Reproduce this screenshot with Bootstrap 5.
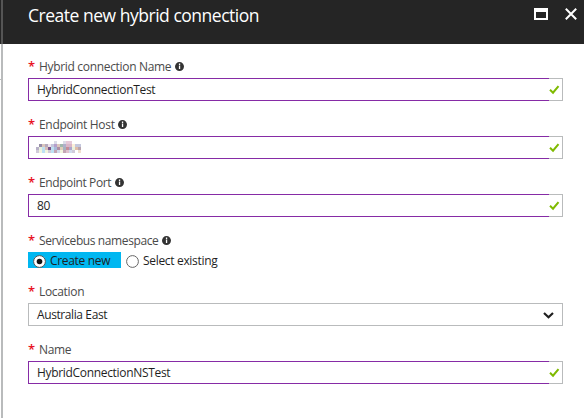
<!DOCTYPE html>
<html lang="en">
<head>
<meta charset="utf-8">
<title>Create new hybrid connection</title>
<link href="https://cdn.jsdelivr.net/npm/bootstrap@5.3.0/dist/css/bootstrap.min.css" rel="stylesheet">
<style>
body{font-family:"Open Sans","Noto Sans",sans-serif;font-size:12px;color:#1f1f1f;background:#fff;height:418px;overflow:hidden}
.blade-edge{width:3px;border-right:2px solid #b9bbbc;background:#fff;padding-top:35px}
.edge-top{width:3px;height:44px;background:#252525;border-right:2px solid #555}
.edge-tick{width:1px;height:1px;background:#bbb}
.blade-head{height:44px;background:#252525;color:#fff;padding:0 7px 0 25px}
.blade-title{font-size:17.5px;line-height:30px;font-weight:400;letter-spacing:-.48px}
.head-icons{gap:17px;padding-top:8px}
.blade-form{padding:14px 21px 0 25px}
.field{margin-bottom:15px}
.field-label{height:20px;line-height:18px;color:#4a4a4a}
.star{width:11px;color:#e81123;font-size:13px;line-height:17px;font-weight:600}
.info{margin-left:3.5px}
.box{height:23px;border:1px solid #b9bbbc;line-height:21px}
.box-main{height:23px;margin:-1px 0 -1px -1px;border:1px solid #862ba6;border-right:0;padding-left:8px;width:521px;flex:none}
.choice-on{width:93px;height:16px;background:#00b7f1;padding-left:5px}
.choice{height:16px;line-height:18px}
.choice-off{padding-left:5px}
.choice svg{margin-right:4px;flex:none}
.t1{letter-spacing:-.32px}
.t2{letter-spacing:-.4px}
</style>
</head>
<body>
<div class="d-flex h-100">
  <div class="d-flex flex-column flex-shrink-0">
    <div class="edge-top"></div>
    <div class="blade-edge flex-grow-1"><div class="edge-tick"></div></div>
  </div>
  <main class="flex-grow-1">
    <header class="blade-head d-flex justify-content-between align-items-start">
      <h1 class="blade-title m-0"><span>Create new hybrid connection</span></h1>
      <div class="head-icons d-flex">
        <svg width="14" height="12"><path fill="#fff" fill-rule="evenodd" d="M0 0h14v12H0zM2 4v6h10V4z"/></svg>
        <svg width="12" height="12"><path d="M.8.8 11.2 11.2M11.2.8.8 11.2" stroke="#fff" stroke-width="2"/></svg>
      </div>
    </header>
    <form class="blade-form">
      <div class="field">
        <div class="field-label d-flex t1"><span class="star">*</span><span>Hybrid connection Name</span><svg class="info" width="9" height="18"><circle cx="4.5" cy="8.6" r="4.5" fill="#333"/><path d="M3.9 5.6h1.3v1.3H3.9zM3.9 7.6h1.3v3.5H3.9z" fill="#fff"/></svg></div>
        <div class="box d-flex"><div class="box-main t1">HybridConnectionTest</div><svg width="11" height="21"><path d="M1 10.8 4 13.7 9.5 7.1" fill="none" stroke="#7fba00" stroke-width="2"/></svg></div>
      </div>
      <div class="field">
        <div class="field-label d-flex t1"><span class="star">*</span><span>Endpoint Host</span><svg class="info" width="9" height="18"><circle cx="4.5" cy="8.6" r="4.5" fill="#333"/><path d="M3.9 5.6h1.3v1.3H3.9zM3.9 7.6h1.3v3.5H3.9z" fill="#fff"/></svg></div>
        <div class="box d-flex"><div class="box-main d-flex">
          <svg width="46" height="21" shape-rendering="crispEdges" stroke-width="3" transform="translate(-1 0)">
            <path stroke="#dcdce8" d="M18 5.5h3M27 5.5h3"/><path stroke="#e5c8d8" d="M30 5.5h6"/>
            <path stroke="#968ca8" d="M3 8.5h3"/><path stroke="#dbc7bd" d="M6 8.5h3M21 8.5h3"/><path stroke="#b5aabd" d="M9 8.5h3"/><path stroke="#efe4ed" d="M12 8.5h3"/><path stroke="#c4c7dc" d="M15 8.5h3M39 8.5h6"/><path stroke="#b49fcc" d="M18 8.5h3"/><path stroke="#9fb8ad" d="M24 8.5h3"/><path stroke="#b0aecb" d="M27 8.5h3"/><path stroke="#dab6c7" d="M30 8.5h6"/><path stroke="#fbefd7" d="M36 8.5h3"/>
            <path stroke="#b8b1c8" d="M0 11.5h3"/><path stroke="#e8f1dd" d="M3 11.5h3M36 11.5h3"/><path stroke="#bddff0" d="M6 11.5h3M15 11.5h3"/><path stroke="#d8bdb7" d="M9 11.5h3"/><path stroke="#79558c" d="M12 11.5h3"/><path stroke="#a8b9d7" d="M18 11.5h3"/><path stroke="#ad8da5" d="M21 11.5h3"/><path stroke="#dfceba" d="M24 11.5h3"/><path stroke="#a4b2bf" d="M27 11.5h3"/><path stroke="#c68c98" d="M30 11.5h3"/><path stroke="#aba5ca" d="M33 11.5h3"/><path stroke="#dfbda7" d="M39 11.5h3"/><path stroke="#b8a5af" d="M42 11.5h3"/>
            <path stroke="#d0cad9" d="M0 14.5h3M12 14.5h3M36 14.5h3"/><path stroke="#f3f5df" d="M3 14.5h3M9 14.5h3M24 14.5h3"/><path stroke="#bce1f4" d="M6 14.5h3M15 14.5h3"/><path stroke="#c2a5b4" d="M18 14.5h3M27 14.5h3"/><path stroke="#d2dbed" d="M21 14.5h3M33 14.5h3"/><path stroke="#dfc1ce" d="M30 14.5h3"/><path stroke="#f1dfcf" d="M42 14.5h3"/>
          </svg></div><svg width="11" height="21"><path d="M1 10.8 4 13.7 9.5 7.1" fill="none" stroke="#7fba00" stroke-width="2"/></svg></div>
      </div>
      <div class="field">
        <div class="field-label d-flex t2"><span class="star">*</span><span>Endpoint Port</span><svg class="info" width="9" height="18"><circle cx="4.5" cy="8.6" r="4.5" fill="#333"/><path d="M3.9 5.6h1.3v1.3H3.9zM3.9 7.6h1.3v3.5H3.9z" fill="#fff"/></svg></div>
        <div class="box d-flex"><div class="box-main t1">80</div><svg width="11" height="21"><path d="M1 10.8 4 13.7 9.5 7.1" fill="none" stroke="#7fba00" stroke-width="2"/></svg></div>
      </div>
      <div class="field">
        <div class="field-label d-flex t2"><span class="star">*</span><span>Servicebus namespace</span><svg class="info" width="9" height="18"><circle cx="4.5" cy="8.6" r="4.5" fill="#333"/><path d="M3.9 5.6h1.3v1.3H3.9zM3.9 7.6h1.3v3.5H3.9z" fill="#fff"/></svg></div>
        <div class="d-flex choice t1">
          <div class="choice-on d-flex"><svg width="13" height="16"><circle cx="6.5" cy="9.5" r="5.9" fill="#fff" stroke="#555"/><circle cx="6.5" cy="9.5" r="2.8" fill="#111"/></svg><span>Create new</span></div>
          <div class="choice-off d-flex"><svg width="13" height="16"><circle cx="6.5" cy="9.5" r="5.9" fill="#fff" stroke="#666"/></svg><span>Select existing</span></div>
        </div>
      </div>
      <div class="field">
        <div class="field-label d-flex t1"><span class="star">*</span><span>Location</span></div>
        <div class="box d-flex justify-content-between t2 ps-2 pe-2"><span>Australia East</span><svg width="11" height="21"><path d="M1 9 5.5 13.2 10 9" fill="none" stroke="#1f1f1f" stroke-width="2.2"/></svg></div>
      </div>
      <div class="field">
        <div class="field-label d-flex t1"><span class="star">*</span><span>Name</span></div>
        <div class="box d-flex"><div class="box-main t1">HybridConnectionNSTest</div><svg width="11" height="21"><path d="M1 10.8 4 13.7 9.5 7.1" fill="none" stroke="#7fba00" stroke-width="2"/></svg></div>
      </div>
    </form>
  </main>
</div>
<script src="https://cdn.jsdelivr.net/npm/bootstrap@5.3.0/dist/js/bootstrap.bundle.min.js"></script>
</body>
</html>
